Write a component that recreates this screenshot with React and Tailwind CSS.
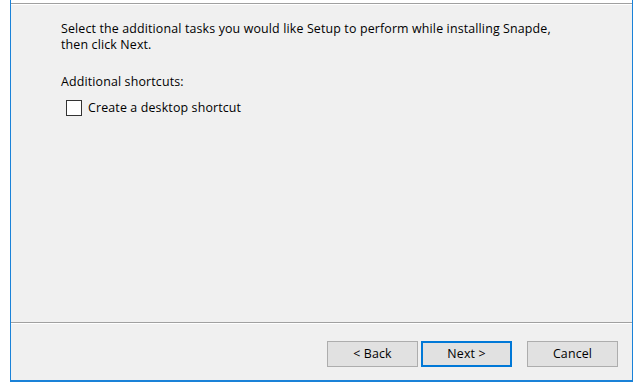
export default function App() {
  const font = { fontFamily: '"Open Sans", "Noto Sans", sans-serif' };
  return (
    <div className="w-[641px] h-[387px] bg-white overflow-hidden" style={font}>
      <div className="ml-[10px] w-[623px] h-[382px] flex flex-col border-l border-r border-b-2 border-[#1a82d8] bg-[#f0f0f0]">
        <div className="h-[3px] bg-white" />
        <div className="h-px bg-[#a0a0a0]" />
        <div className="h-px bg-white" />
        <div className="flex-1 pl-[50px] pt-[16px] text-[12.4px] tracking-[0.15px] leading-[16px] text-black">
          <p className="w-[540px]">
            Select the additional tasks you would like Setup to perform while installing Snapde,
            <br />
            then click Next.
          </p>
          <p className="mt-[21px]">Additional shortcuts:</p>
          <label className="mt-[10px] ml-[5px] flex items-center gap-[6px]">
            <span className="w-[16px] h-[16px] border border-[#333333] bg-white" />
            <span>Create a desktop shortcut</span>
          </label>
        </div>
        <div className="h-px bg-[#a0a0a0]" />
        <div className="h-px bg-white" />
        <div className="h-[56px] flex items-start justify-end pr-[14px] pt-[17px] text-[12.4px] tracking-[0.15px] text-black">
          <button className="w-[91px] h-[26px] bg-[#e1e1e1] border border-[#adadad] flex items-center justify-center">
            &lt; Back
          </button>
          <button className="ml-[3px] w-[91px] h-[26px] bg-[#e1e1e1] border-2 border-[#0078d7] flex items-center justify-center">
            Next &gt;
          </button>
          <button className="ml-[15px] w-[91px] h-[26px] bg-[#e1e1e1] border border-[#adadad] flex items-center justify-center">
            Cancel
          </button>
        </div>
      </div>
    </div>
  );
}
